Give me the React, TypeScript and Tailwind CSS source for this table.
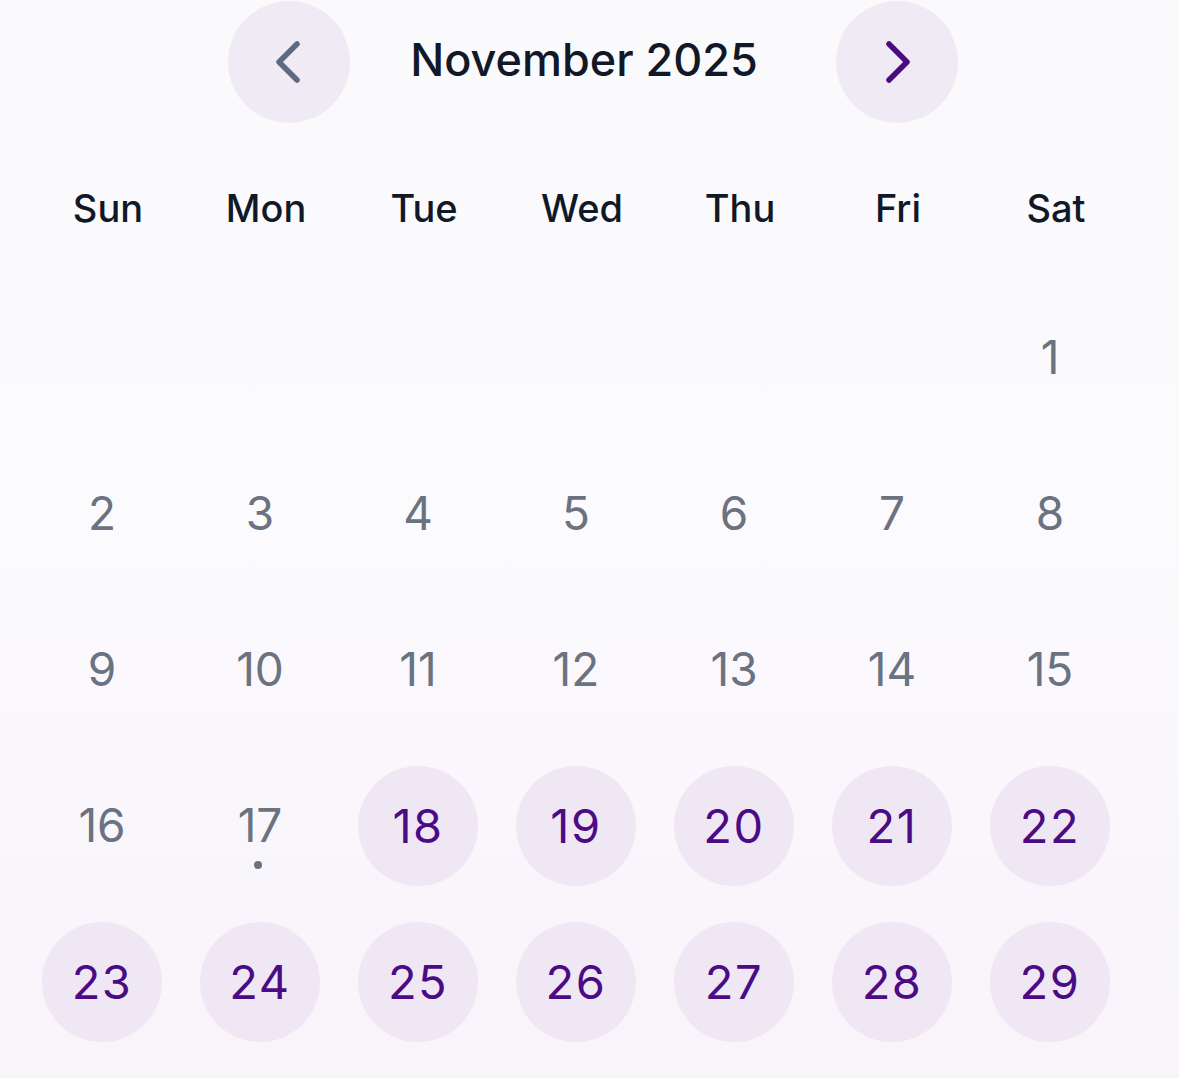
import React from 'react';

const weekdays = ['Sun', 'Mon', 'Tue', 'Wed', 'Thu', 'Fri', 'Sat'];

// November 2025 starts on a Saturday
const leading = 6;
const daysInMonth = 30;
const today = 17;

function Chevron({ dir, className }: { dir: 'left' | 'right'; className: string }) {
  return (
    <svg width="30" height="44" viewBox="0 0 30 44" fill="none" className={className}>
      <path
        d={dir === 'left' ? 'M24 4 L6 22 L24 40' : 'M6 4 L24 22 L6 40'}
        stroke="currentColor"
        strokeWidth="5.5"
        strokeLinecap="round"
        strokeLinejoin="round"
      />
    </svg>
  );
}

export default function App() {
  const cells: (number | null)[] = [];
  for (let i = 0; i < leading; i++) cells.push(null);
  for (let d = 1; d < daysInMonth; d++) cells.push(d);

  return (
    <div
      className="w-[1179px] h-[1078px] overflow-hidden bg-gradient-to-b from-[#fafafc] via-[#fbfafd] to-[#f8f4fa]"
      style={{ fontFamily: 'Inter, "Noto Sans", sans-serif' }}
    >
      {/* month header */}
      <div className="flex items-center h-[124px] pl-[228px]">
        <button className="w-[122px] h-[122px] rounded-full bg-[#efeaf3] flex items-center justify-center text-[#5e6a80]">
          <Chevron dir="left" className="-ml-[2px]" />
        </button>
        <div className="w-[486px] flex justify-center pr-[18px] -mt-[4px]">
          <span className="text-[45px] font-medium text-[#111827]">November 2025</span>
        </div>
        <button className="w-[122px] h-[122px] rounded-full bg-[#efeaf3] flex items-center justify-center text-[#4a0a82]">
          <Chevron dir="right" className="ml-[2px]" />
        </button>
      </div>

      {/* weekday labels */}
      <div className="grid grid-cols-[repeat(7,158px)] pl-[29px] h-[143px] items-center mt-[13px]">
        {weekdays.map((w) => (
          <div key={w} className="text-center text-[38px] font-medium text-[#111827]">
            {w}
          </div>
        ))}
      </div>

      {/* days */}
      <div className="grid grid-cols-[repeat(7,158px)] auto-rows-[156px] pl-[23px]">
        {cells.map((d, i) => {
          if (d === null) return <div key={`e${i}`} />;
          const upcoming = d > today;
          return (
            <div key={d} className="relative flex items-center justify-center">
              {upcoming ? (
                <div className="w-[120px] h-[120px] rounded-full bg-[#efe8f4] flex items-center justify-center">
                  <span className="text-[47px] font-normal text-[#4b0b85] tracking-[1.5px]">{d}</span>
                </div>
              ) : (
                <span className="text-[46px] text-[#6b7280] -mt-[2px]">{d}</span>
              )}
              {d === today && (
                <span className="absolute left-1/2 top-[113px] w-[8px] h-[8px] -ml-[6px] rounded-full bg-[#6b7280]" />
              )}
            </div>
          );
        })}
      </div>
    </div>
  );
}
